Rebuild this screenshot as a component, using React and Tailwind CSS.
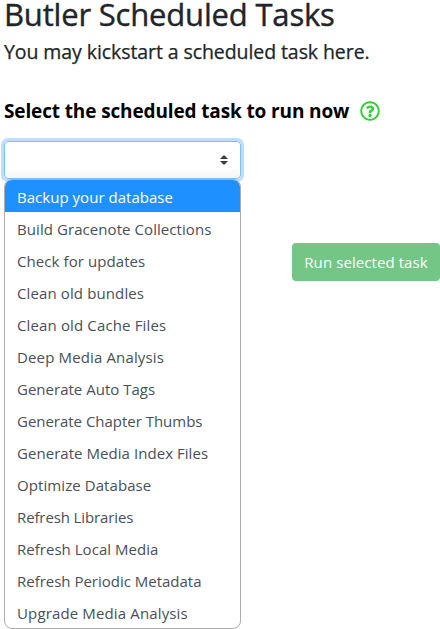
const tasks = [
  ["Backup your database", "tracking-[0.03px]"],
  ["Build Gracenote Collections", "tracking-[0.07px]"],
  ["Check for updates", "tracking-[0.08px]"],
  ["Clean old bundles", "tracking-[0.12px]"],
  ["Clean old Cache Files", "tracking-[0.14px]"],
  ["Deep Media Analysis", "tracking-[0.14px]"],
  ["Generate Auto Tags", "tracking-[0.01px]"],
  ["Generate Chapter Thumbs", "tracking-[-0.02px]"],
  ["Generate Media Index Files", "tracking-[0.05px]"],
  ["Optimize Database", "tracking-[0.08px]"],
  ["Refresh Libraries", "tracking-[-0.12px]"],
  ["Refresh Local Media", "tracking-[0.03px]"],
  ["Refresh Periodic Metadata", "tracking-[-0.01px]"],
  ["Upgrade Media Analysis", "tracking-[0.14px]"],
];

function HelpIcon() {
  return (
    <svg viewBox="0 0 512 512" className="size-5 fill-[#32cd32]" aria-hidden="true">
      <path d="M256 8C119.043 8 8 119.083 8 256c0 136.997 111.043 248 248 248s248-111.003 248-248C504 119.083 392.957 8 256 8zm0 448c-110.532 0-200-89.431-200-200 0-110.495 89.472-200 200-200 110.491 0 200 89.471 200 200 0 110.53-89.431 200-200 200zm107.244-255.2c0 67.052-72.421 68.084-72.421 92.863V300c0 6.627-5.373 12-12 12h-45.647c-6.627 0-12-5.373-12-12v-8.659c0-35.745 27.1-50.034 47.579-61.516 17.561-9.845 28.324-16.541 28.324-29.579 0-17.246-21.999-28.693-39.784-28.693-23.189 0-33.894 10.977-48.942 29.969-4.057 5.12-11.46 6.071-16.666 2.124l-27.824-21.098c-5.107-3.872-6.251-11.066-2.644-16.363C184.846 131.491 214.94 112 261.794 112c49.071 0 101.45 38.304 101.45 88.8zM298 368c0 23.159-18.841 42-42 42s-42-18.841-42-42 18.841-42 42-42 42 18.841 42 42z" />
    </svg>
  );
}

export default function App() {
  return (
    <main className="h-[629px] w-[440px] overflow-hidden bg-white pl-1 font-['Open_Sans','Noto_Sans',sans-serif] text-[#212529] whitespace-nowrap">
      <h1 className="h-8 text-[31px] leading-[28px] font-medium tracking-[-0.18px] [-webkit-text-stroke:0.4px_#212529]">Butler Scheduled Tasks</h1>
      <h2 className="h-10 text-[19.5px] leading-[40px] font-medium tracking-[-0.08px] [-webkit-text-stroke:0.25px_#212529]">You may kickstart a scheduled task here.</h2>
      <div className="mt-6 flex h-[30px] items-center gap-[10px]">
        <h3 className="w-[346px] text-[19px] leading-[30px] font-bold tracking-[-0.13px] text-black">Select the scheduled task to run now</h3>
        <HelpIcon />
      </div>
      <div className="mt-[15px] flex justify-between">
        <div className="relative w-[237px]">
          <button className="flex h-[38px] w-full items-center justify-end rounded border border-[#80bdff] bg-linear-to-b from-white from-70% to-[#f5f5f5] pr-3 shadow-[0_0_0_3px_#bfdeff]" aria-label="Scheduled task">
            <svg viewBox="0 0 4 5" className="h-[10px] w-2 fill-[#343a40]" aria-hidden="true">
              <path d="M2 0L0 2h4zm0 5L0 3h4z" />
            </svg>
          </button>
          <ul className="absolute top-[38px] left-0 h-[450px] w-[237px] overflow-hidden rounded-lg border border-[#adadad] bg-white text-[15px] text-[#495057]">
            {tasks.map(([name, tracking], i) => (
              <li key={name} className={i === 0 ? "h-8 bg-[#1e90ff] pl-3 leading-[34px] text-white" : "h-8 pl-3 leading-[34px]"}>
                <span className={tracking}>{name}</span>
              </li>
            ))}
          </ul>
        </div>
        <button className="mt-[102px] h-[38px] w-[148px] rounded bg-[#74c686] text-[15px] leading-[38px] tracking-[0.08px] text-white">Run selected task</button>
      </div>
    </main>
  );
}
